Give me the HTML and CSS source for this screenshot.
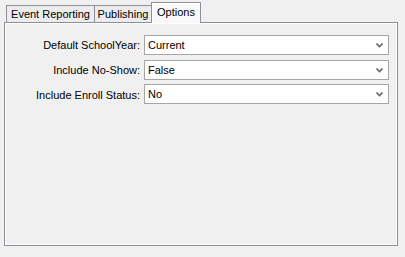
FILE: index.html
```html
<!DOCTYPE html>
<html>
<head>
<meta charset="utf-8">
<link rel="stylesheet" href="styles.css">
</head>
<body>
<div class="frame">
  <div class="tabs">
    <div class="tab tab-event">Event Reporting</div>
    <div class="tab tab-pub">Publishing</div>
    <div class="tab tab-opt selected">Options</div>
  </div>
  <div class="panel">
    <div class="form">
      <label class="lbl">Default SchoolYear:</label>
      <div class="combo"><span>Current</span><svg class="chev" width="7" height="5" viewBox="0 0 7 5"><path d="M0.5 0.5 L3.5 3.5 L6.5 0.5" fill="none" stroke="#6b6b6b" stroke-width="1.6"/></svg></div>
      <label class="lbl">Include No-Show:</label>
      <div class="combo"><span>False</span><svg class="chev" width="7" height="5" viewBox="0 0 7 5"><path d="M0.5 0.5 L3.5 3.5 L6.5 0.5" fill="none" stroke="#6b6b6b" stroke-width="1.6"/></svg></div>
      <label class="lbl">Include Enroll Status:</label>
      <div class="combo"><span>No</span><svg class="chev" width="7" height="5" viewBox="0 0 7 5"><path d="M0.5 0.5 L3.5 3.5 L6.5 0.5" fill="none" stroke="#6b6b6b" stroke-width="1.6"/></svg></div>
    </div>
  </div>
</div>
</body>
</html>
```

FILE: styles.css
```css
html, body {
  margin: 0;
  padding: 0;
  background: #f0f0f0;
  width: 405px;
  height: 257px;
  overflow: hidden;
}
.frame {
  padding: 2px 7px 0 4px;
  font-family: "Liberation Sans", Arial, sans-serif;
  font-size: 11px;
  color: #000;
}
.tabs {
  display: flex;
  align-items: flex-end;
  padding-left: 2px;
  height: 20px;
  position: relative;
  z-index: 1;
}
.tab {
  height: 17px;
  line-height: 17px;
  padding: 0;
  text-align: center;
  white-space: nowrap;
  border: 1px solid #8e8f99;
  border-bottom: none;
  border-right: none;
  background: #ececec;
  box-sizing: border-box;
}
.tab-event { width: 88px; }
.tab-pub { width: 57px; }
.tab-opt { width: 50px; }
.tab.selected {
  height: 21px;
  line-height: 18px;
  border-right: 1px solid #8e8f99;
  background: #f8f8f8;
  margin-bottom: -1px;
  box-shadow: inset 1px 1px 0 #ffffff;
}
.panel {
  border: 1px solid #8e8f99;
  box-shadow: inset -1px -1px 0 #ffffff, inset 1px 1px 0 #ffffff;
  height: 224px;
  box-sizing: border-box;
  background: #f0f0f0;
}
.form {
  display: grid;
  grid-template-columns: 135px 245px;
  column-gap: 4px;
  row-gap: 5px;
  padding: 12px 0 0 0;
  align-items: center;
}
.form .combo:nth-of-type(3) {
  margin-top: -1px;
}
.lbl {
  text-align: right;
  white-space: nowrap;
}
.combo {
  height: 20px;
  box-sizing: border-box;
  border: 1px solid #a6a6a6;
  background: #fff;
  display: flex;
  align-items: center;
  justify-content: space-between;
  padding: 0 5px 0 3px;
}
.chev {
  display: block;
  margin-top: 1px;
}
```
